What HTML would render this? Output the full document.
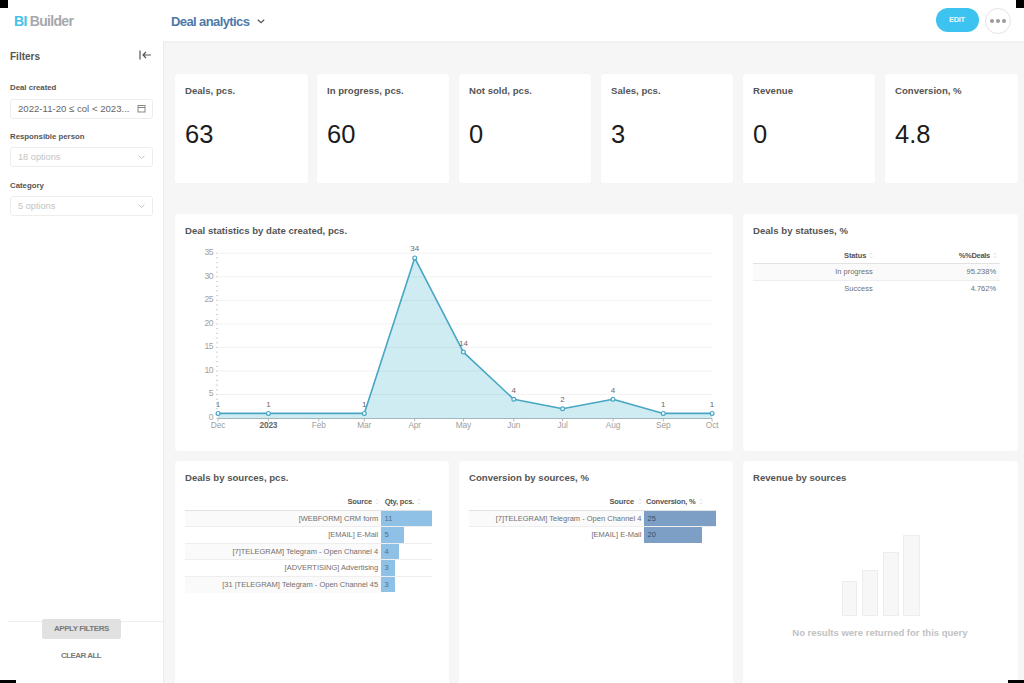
<!DOCTYPE html>
<html><head><meta charset="utf-8">
<style>
*{box-sizing:border-box;margin:0;padding:0}
html,body{width:1024px;height:683px;overflow:hidden;background:#fff;font-family:"Liberation Sans",sans-serif;position:relative}
.abs{position:absolute}
.t{position:absolute;white-space:nowrap;line-height:1}
#main{position:absolute;left:163px;top:41px;width:861px;height:642px;background:#f6f6f6;border-left:1px solid #ececec;box-shadow:inset 0 2px 2px rgba(0,0,0,0.025)}
.card{position:absolute;background:#fff;border-radius:3px;box-shadow:0 0 2px rgba(0,0,0,0.02)}
.kt{position:absolute;left:10px;top:12px;font-size:9.6px;font-weight:700;color:#555;white-space:nowrap;line-height:1}
.kv{position:absolute;left:10px;top:48px;font-size:25.5px;color:#1c1c1c;white-space:nowrap;line-height:1}
.ct{position:absolute;left:10px;top:12px;font-size:9.6px;font-weight:700;color:#555;white-space:nowrap;line-height:1}
.corner{position:absolute;background:#000}
.lbl{font-size:7.8px;font-weight:700;color:#555}
.inp{position:absolute;left:10px;width:143px;height:20px;border:1px solid #ededed;border-radius:3px;background:#fff}
</style></head><body>

<!-- header -->
<div class="t" style="left:14px;top:14px;font-size:14px;font-weight:700;letter-spacing:-0.7px"><span style="color:#45c1ea">BI</span> <span style="color:#a6a8ab">Builder</span></div>
<div class="t" style="left:171px;top:15px;font-size:13px;font-weight:700;color:#4d79aa;letter-spacing:-0.6px">Deal analytics</div>
<svg class="abs" style="left:256px;top:17px" width="10" height="8" viewBox="0 0 10 8"><path d="M1.8 2.8 L5 5.8 L8.2 2.8" fill="none" stroke="#555" stroke-width="1.2"/></svg>
<div class="abs" style="left:936px;top:8px;width:43px;height:24px;border-radius:12px;background:#3cc3f0"></div>
<div class="t" style="left:949px;top:16px;font-size:7.5px;font-weight:700;color:#eaf8fe;letter-spacing:-0.3px">EDIT</div>
<div class="abs" style="left:985px;top:8px;width:26px;height:26px;border-radius:50%;border:1px solid #e4e4e4"></div>
<div class="abs" style="left:990px;top:19px;width:4px;height:4px;border-radius:50%;background:#9a9a9a"></div>
<div class="abs" style="left:996px;top:19px;width:4px;height:4px;border-radius:50%;background:#9a9a9a"></div>
<div class="abs" style="left:1002px;top:19px;width:4px;height:4px;border-radius:50%;background:#9a9a9a"></div>

<!-- sidebar -->
<div class="t" style="left:10px;top:52px;font-size:10px;font-weight:700;color:#555">Filters</div>
<svg class="abs" style="left:138px;top:49px" width="14" height="12" viewBox="0 0 14 12"><path d="M2 1.5 V10.5" stroke="#555" stroke-width="1.2"/><path d="M13 6 H5 M8 3 L5 6 L8 9" fill="none" stroke="#555" stroke-width="1.2"/></svg>

<div class="t lbl" style="left:10px;top:84px">Deal created</div>
<div class="inp" style="top:99px"></div>
<div class="t" style="left:18px;top:104px;font-size:9.6px;color:#666">2022-11-20 ≤ col &lt; 2023...</div>
<svg class="abs" style="left:137px;top:104px" width="9" height="9" viewBox="0 0 9 9"><rect x="1" y="1.5" width="7" height="6.5" fill="none" stroke="#888" stroke-width="1"/><path d="M1 3.5 H8" stroke="#888" stroke-width="1"/></svg>

<div class="t lbl" style="left:10px;top:133px">Responsible person</div>
<div class="inp" style="top:147px"></div>
<div class="t" style="left:18px;top:153px;font-size:9.2px;color:#c4c4c4">18 options</div>
<svg class="abs" style="left:137px;top:153px" width="9" height="8" viewBox="0 0 9 8"><path d="M1.5 2.5 L4.5 5.5 L7.5 2.5" fill="none" stroke="#c8c8c8" stroke-width="1"/></svg>

<div class="t lbl" style="left:10px;top:182px">Category</div>
<div class="inp" style="top:196px"></div>
<div class="t" style="left:18px;top:202px;font-size:9.2px;color:#c4c4c4">5 options</div>
<svg class="abs" style="left:137px;top:202px" width="9" height="8" viewBox="0 0 9 8"><path d="M1.5 2.5 L4.5 5.5 L7.5 2.5" fill="none" stroke="#c8c8c8" stroke-width="1"/></svg>

<div class="abs" style="left:8px;top:621px;width:155px;height:1px;background:#eeeeee"></div>
<div class="abs" style="left:42px;top:619px;width:79px;height:20px;background:#e1e1e1;border-radius:2px"></div>
<div class="t" style="left:54px;top:625px;font-size:8px;font-weight:700;color:#7a7a7a;letter-spacing:-0.45px">APPLY FILTERS</div>
<div class="t" style="left:61px;top:652px;font-size:8px;font-weight:700;color:#7a7a7a;letter-spacing:-0.55px">CLEAR ALL</div>

<!-- main -->
<div id="main"></div>

<!-- KPI cards -->
<div class="card" style="left:175px;top:74px;width:133px;height:109px"><div class="kt">Deals, pcs.</div><div class="kv">63</div></div>
<div class="card" style="left:317px;top:74px;width:132px;height:109px"><div class="kt">In progress, pcs.</div><div class="kv">60</div></div>
<div class="card" style="left:459px;top:74px;width:132px;height:109px"><div class="kt">Not sold, pcs.</div><div class="kv">0</div></div>
<div class="card" style="left:601px;top:74px;width:132px;height:109px"><div class="kt">Sales, pcs.</div><div class="kv">3</div></div>
<div class="card" style="left:743px;top:74px;width:132px;height:109px"><div class="kt">Revenue</div><div class="kv">0</div></div>
<div class="card" style="left:885px;top:74px;width:133px;height:109px"><div class="kt">Conversion, %</div><div class="kv">4.8</div></div>

<!-- row 2 -->
<div class="card" style="left:175px;top:214px;width:558px;height:237px"><div class="ct">Deal statistics by date created, pcs.</div></div>
<div class="card" style="left:743px;top:214px;width:275px;height:237px"><div class="ct">Deals by statuses, %</div></div>

<!--CHART START-->
<svg class="abs" style="left:175px;top:214px" width="558" height="237" viewBox="175 214 558 237" font-family="Liberation Sans">
<line x1="216" y1="418.1" x2="218" y2="418.1" stroke="#c4c4c4" stroke-width="0.8"/>
<line x1="216" y1="413.4" x2="218" y2="413.4" stroke="#c4c4c4" stroke-width="0.8"/>
<line x1="216" y1="408.7" x2="218" y2="408.7" stroke="#c4c4c4" stroke-width="0.8"/>
<line x1="216" y1="404.0" x2="218" y2="404.0" stroke="#c4c4c4" stroke-width="0.8"/>
<line x1="216" y1="399.3" x2="218" y2="399.3" stroke="#c4c4c4" stroke-width="0.8"/>
<line x1="216" y1="394.5" x2="218" y2="394.5" stroke="#c4c4c4" stroke-width="0.8"/>
<line x1="216" y1="389.8" x2="218" y2="389.8" stroke="#c4c4c4" stroke-width="0.8"/>
<line x1="216" y1="385.1" x2="218" y2="385.1" stroke="#c4c4c4" stroke-width="0.8"/>
<line x1="216" y1="380.4" x2="218" y2="380.4" stroke="#c4c4c4" stroke-width="0.8"/>
<line x1="216" y1="375.7" x2="218" y2="375.7" stroke="#c4c4c4" stroke-width="0.8"/>
<line x1="216" y1="371.0" x2="218" y2="371.0" stroke="#c4c4c4" stroke-width="0.8"/>
<line x1="216" y1="366.3" x2="218" y2="366.3" stroke="#c4c4c4" stroke-width="0.8"/>
<line x1="216" y1="361.6" x2="218" y2="361.6" stroke="#c4c4c4" stroke-width="0.8"/>
<line x1="216" y1="356.9" x2="218" y2="356.9" stroke="#c4c4c4" stroke-width="0.8"/>
<line x1="216" y1="352.1" x2="218" y2="352.1" stroke="#c4c4c4" stroke-width="0.8"/>
<line x1="216" y1="347.4" x2="218" y2="347.4" stroke="#c4c4c4" stroke-width="0.8"/>
<line x1="216" y1="342.7" x2="218" y2="342.7" stroke="#c4c4c4" stroke-width="0.8"/>
<line x1="216" y1="338.0" x2="218" y2="338.0" stroke="#c4c4c4" stroke-width="0.8"/>
<line x1="216" y1="333.3" x2="218" y2="333.3" stroke="#c4c4c4" stroke-width="0.8"/>
<line x1="216" y1="328.6" x2="218" y2="328.6" stroke="#c4c4c4" stroke-width="0.8"/>
<line x1="216" y1="323.9" x2="218" y2="323.9" stroke="#c4c4c4" stroke-width="0.8"/>
<line x1="216" y1="319.2" x2="218" y2="319.2" stroke="#c4c4c4" stroke-width="0.8"/>
<line x1="216" y1="314.5" x2="218" y2="314.5" stroke="#c4c4c4" stroke-width="0.8"/>
<line x1="216" y1="309.7" x2="218" y2="309.7" stroke="#c4c4c4" stroke-width="0.8"/>
<line x1="216" y1="305.0" x2="218" y2="305.0" stroke="#c4c4c4" stroke-width="0.8"/>
<line x1="216" y1="300.3" x2="218" y2="300.3" stroke="#c4c4c4" stroke-width="0.8"/>
<line x1="216" y1="295.6" x2="218" y2="295.6" stroke="#c4c4c4" stroke-width="0.8"/>
<line x1="216" y1="290.9" x2="218" y2="290.9" stroke="#c4c4c4" stroke-width="0.8"/>
<line x1="216" y1="286.2" x2="218" y2="286.2" stroke="#c4c4c4" stroke-width="0.8"/>
<line x1="216" y1="281.5" x2="218" y2="281.5" stroke="#c4c4c4" stroke-width="0.8"/>
<line x1="216" y1="276.8" x2="218" y2="276.8" stroke="#c4c4c4" stroke-width="0.8"/>
<line x1="216" y1="272.1" x2="218" y2="272.1" stroke="#c4c4c4" stroke-width="0.8"/>
<line x1="216" y1="267.3" x2="218" y2="267.3" stroke="#c4c4c4" stroke-width="0.8"/>
<line x1="216" y1="262.6" x2="218" y2="262.6" stroke="#c4c4c4" stroke-width="0.8"/>
<line x1="216" y1="257.9" x2="218" y2="257.9" stroke="#c4c4c4" stroke-width="0.8"/>
<line x1="216" y1="253.2" x2="218" y2="253.2" stroke="#c4c4c4" stroke-width="0.8"/>
<text x="213.3" y="420.0" font-size="8.6" letter-spacing="-0.35" fill="#a0a0a0" text-anchor="end">0</text>
<text x="213.3" y="396.4" font-size="8.6" letter-spacing="-0.35" fill="#a0a0a0" text-anchor="end">5</text>
<text x="213.3" y="372.9" font-size="8.6" letter-spacing="-0.35" fill="#a0a0a0" text-anchor="end">10</text>
<text x="213.3" y="349.29999999999995" font-size="8.6" letter-spacing="-0.35" fill="#a0a0a0" text-anchor="end">15</text>
<text x="213.3" y="325.79999999999995" font-size="8.6" letter-spacing="-0.35" fill="#a0a0a0" text-anchor="end">20</text>
<text x="213.3" y="302.2" font-size="8.6" letter-spacing="-0.35" fill="#a0a0a0" text-anchor="end">25</text>
<text x="213.3" y="278.7" font-size="8.6" letter-spacing="-0.35" fill="#a0a0a0" text-anchor="end">30</text>
<text x="213.3" y="255.1" font-size="8.6" letter-spacing="-0.35" fill="#a0a0a0" text-anchor="end">35</text>
<polygon points="218,418.5 218,413.4 268.4,413.4 364.3,413.4 414.7,257.9 463.4,352.1 513.8,399.3 562.6,408.7 613,399.3 663.3,413.4 712.1,413.4 712.1,418.5" fill="#d0ecf3"/>
<line x1="219" y1="394.5" x2="712.5" y2="394.5" stroke="rgba(0,0,0,0.055)" stroke-width="1"/>
<line x1="219" y1="371.0" x2="712.5" y2="371.0" stroke="rgba(0,0,0,0.055)" stroke-width="1"/>
<line x1="219" y1="347.4" x2="712.5" y2="347.4" stroke="rgba(0,0,0,0.055)" stroke-width="1"/>
<line x1="219" y1="323.9" x2="712.5" y2="323.9" stroke="rgba(0,0,0,0.055)" stroke-width="1"/>
<line x1="219" y1="300.3" x2="712.5" y2="300.3" stroke="rgba(0,0,0,0.055)" stroke-width="1"/>
<line x1="219" y1="276.8" x2="712.5" y2="276.8" stroke="rgba(0,0,0,0.055)" stroke-width="1"/>
<line x1="219" y1="253.2" x2="712.5" y2="253.2" stroke="rgba(0,0,0,0.055)" stroke-width="1"/>
<line x1="218" y1="418.5" x2="712.1" y2="418.5" stroke="#a4b6bd" stroke-width="1"/>
<line x1="218" y1="418.5" x2="218" y2="421.5" stroke="#aaa" stroke-width="0.8"/>
<text x="218" y="428.2" font-size="8.3" fill="#a0a0a0" letter-spacing="-0.1" text-anchor="middle">Dec</text>
<line x1="268.4" y1="418.5" x2="268.4" y2="421.5" stroke="#aaa" stroke-width="0.8"/>
<text x="268.4" y="428.2" font-size="8.3" font-weight="700" fill="#666" letter-spacing="-0.2" text-anchor="middle">2023</text>
<line x1="318.8" y1="418.5" x2="318.8" y2="421.5" stroke="#aaa" stroke-width="0.8"/>
<text x="318.8" y="428.2" font-size="8.3" fill="#a0a0a0" letter-spacing="-0.1" text-anchor="middle">Feb</text>
<line x1="364.3" y1="418.5" x2="364.3" y2="421.5" stroke="#aaa" stroke-width="0.8"/>
<text x="364.3" y="428.2" font-size="8.3" fill="#a0a0a0" letter-spacing="-0.1" text-anchor="middle">Mar</text>
<line x1="414.7" y1="418.5" x2="414.7" y2="421.5" stroke="#aaa" stroke-width="0.8"/>
<text x="414.7" y="428.2" font-size="8.3" fill="#a0a0a0" letter-spacing="-0.1" text-anchor="middle">Apr</text>
<line x1="463.4" y1="418.5" x2="463.4" y2="421.5" stroke="#aaa" stroke-width="0.8"/>
<text x="463.4" y="428.2" font-size="8.3" fill="#a0a0a0" letter-spacing="-0.1" text-anchor="middle">May</text>
<line x1="513.8" y1="418.5" x2="513.8" y2="421.5" stroke="#aaa" stroke-width="0.8"/>
<text x="513.8" y="428.2" font-size="8.3" fill="#a0a0a0" letter-spacing="-0.1" text-anchor="middle">Jun</text>
<line x1="562.6" y1="418.5" x2="562.6" y2="421.5" stroke="#aaa" stroke-width="0.8"/>
<text x="562.6" y="428.2" font-size="8.3" fill="#a0a0a0" letter-spacing="-0.1" text-anchor="middle">Jul</text>
<line x1="613" y1="418.5" x2="613" y2="421.5" stroke="#aaa" stroke-width="0.8"/>
<text x="613" y="428.2" font-size="8.3" fill="#a0a0a0" letter-spacing="-0.1" text-anchor="middle">Aug</text>
<line x1="663.3" y1="418.5" x2="663.3" y2="421.5" stroke="#aaa" stroke-width="0.8"/>
<text x="663.3" y="428.2" font-size="8.3" fill="#a0a0a0" letter-spacing="-0.1" text-anchor="middle">Sep</text>
<line x1="712.1" y1="418.5" x2="712.1" y2="421.5" stroke="#aaa" stroke-width="0.8"/>
<text x="712.1" y="428.2" font-size="8.3" fill="#a0a0a0" letter-spacing="-0.1" text-anchor="middle">Oct</text>
<polyline points="218,413.4 268.4,413.4 364.3,413.4 414.7,257.9 463.4,352.1 513.8,399.3 562.6,408.7 613,399.3 663.3,413.4 712.1,413.4" fill="none" stroke="#47a6c4" stroke-width="1.6" stroke-linejoin="round"/>
<circle cx="218" cy="413.4" r="1.9" fill="#fff" stroke="#45a5c3" stroke-width="1.2"/>
<text x="218" y="406.9" font-size="8" fill="#6a6a6a" text-anchor="middle">1</text>
<circle cx="268.4" cy="413.4" r="1.9" fill="#fff" stroke="#45a5c3" stroke-width="1.2"/>
<text x="268.4" y="406.9" font-size="8" fill="#6a6a6a" text-anchor="middle">1</text>
<circle cx="364.3" cy="413.4" r="1.9" fill="#fff" stroke="#45a5c3" stroke-width="1.2"/>
<text x="364.3" y="406.9" font-size="8" fill="#6a6a6a" text-anchor="middle">1</text>
<circle cx="414.7" cy="257.9" r="1.9" fill="#fff" stroke="#45a5c3" stroke-width="1.2"/>
<text x="414.7" y="251.39999999999998" font-size="8" fill="#6a6a6a" text-anchor="middle">34</text>
<circle cx="463.4" cy="352.1" r="1.9" fill="#fff" stroke="#45a5c3" stroke-width="1.2"/>
<text x="463.4" y="345.6" font-size="8" fill="#6a6a6a" text-anchor="middle">14</text>
<circle cx="513.8" cy="399.3" r="1.9" fill="#fff" stroke="#45a5c3" stroke-width="1.2"/>
<text x="513.8" y="392.8" font-size="8" fill="#6a6a6a" text-anchor="middle">4</text>
<circle cx="562.6" cy="408.7" r="1.9" fill="#fff" stroke="#45a5c3" stroke-width="1.2"/>
<text x="562.6" y="402.2" font-size="8" fill="#6a6a6a" text-anchor="middle">2</text>
<circle cx="613" cy="399.3" r="1.9" fill="#fff" stroke="#45a5c3" stroke-width="1.2"/>
<text x="613" y="392.8" font-size="8" fill="#6a6a6a" text-anchor="middle">4</text>
<circle cx="663.3" cy="413.4" r="1.9" fill="#fff" stroke="#45a5c3" stroke-width="1.2"/>
<text x="663.3" y="406.9" font-size="8" fill="#6a6a6a" text-anchor="middle">1</text>
<circle cx="712.1" cy="413.4" r="1.9" fill="#fff" stroke="#45a5c3" stroke-width="1.2"/>
<text x="712.1" y="406.9" font-size="8" fill="#6a6a6a" text-anchor="middle">1</text>
</svg>
<!--CHART END-->
<!-- row 3 -->
<div class="card" style="left:175px;top:461px;width:274px;height:230px"><div class="ct">Deals by sources, pcs.</div></div>
<div class="card" style="left:459px;top:461px;width:274px;height:230px"><div class="ct">Conversion by sources, %</div></div>
<div class="card" style="left:743px;top:461px;width:275px;height:230px"><div class="ct">Revenue by sources</div></div>

<!--TABLES START-->
<div class="abs" style="left:752.5px;top:264px;width:247px;height:16.5px;background:#fafafa;"></div>
<div class="abs" style="left:752.5px;top:263px;width:247px;height:1px;background:#e2e2e2;"></div>
<div class="abs" style="left:752.5px;top:280px;width:247px;height:1px;background:#eeeeee;"></div>
<div class="t" style="right:157.7px;top:251.8px;font-size:7.5px;font-weight:700;color:#555;letter-spacing:-0.1px">Status</div>
<svg class="abs" style="left:868.5px;top:251.9px" width="4" height="7" viewBox="0 0 4 7"><path d="M0.5 2.8 L2 1 L3.5 2.8 M0.5 4.2 L2 6 L3.5 4.2" fill="none" stroke="#e0e0e0" stroke-width="0.8"/></svg>
<div class="t" style="right:34.0px;top:251.8px;font-size:7.5px;font-weight:700;color:#555;letter-spacing:-0.3px">%%Deals</div>
<svg class="abs" style="left:992.5px;top:251.9px" width="4" height="7" viewBox="0 0 4 7"><path d="M0.5 2.8 L2 1 L3.5 2.8 M0.5 4.2 L2 6 L3.5 4.2" fill="none" stroke="#e0e0e0" stroke-width="0.8"/></svg>
<div class="t" style="right:151.3px;top:268.2px;font-size:7.5px;font-weight:400;color:#707070;">In progress</div>
<div class="t" style="right:27.9px;top:268.2px;font-size:7.5px;font-weight:400;color:#707070;">95.238%</div>
<div class="t" style="right:151.3px;top:284.6px;font-size:7.5px;font-weight:400;color:#707070;">Success</div>
<div class="t" style="right:27.9px;top:284.6px;font-size:7.5px;font-weight:400;color:#707070;">4.762%</div>
<div class="abs" style="left:184.6px;top:510.1px;width:197px;height:16.55px;background:#fafafa;"></div>
<div class="abs" style="left:381.2px;top:510.4px;width:50.4px;height:15.8px;background:#8fc0e6;"></div>
<div class="t" style="right:645.8px;top:514.6px;font-size:7.5px;font-weight:400;color:#707070;">[WEBFORM] CRM form</div>
<div class="t" style="left:384.6px;top:514.6px;font-size:7.5px;font-weight:400;color:#4f6f90;">11</div>
<div class="abs" style="left:184.6px;top:526.1px;width:247px;height:1px;background:#eeeeee;"></div>
<div class="abs" style="left:381.2px;top:526.9px;width:22.9px;height:15.8px;background:#8fc0e6;"></div>
<div class="t" style="right:645.8px;top:531.1px;font-size:7.5px;font-weight:400;color:#707070;">[EMAIL] E-Mail</div>
<div class="t" style="left:384.6px;top:531.1px;font-size:7.5px;font-weight:400;color:#4f6f90;">5</div>
<div class="abs" style="left:184.6px;top:543.2px;width:197px;height:16.55px;background:#fafafa;"></div>
<div class="abs" style="left:184.6px;top:542.7px;width:247px;height:1px;background:#eeeeee;"></div>
<div class="abs" style="left:381.2px;top:543.5px;width:18.3px;height:15.8px;background:#8fc0e6;"></div>
<div class="t" style="right:645.8px;top:547.7px;font-size:7.5px;font-weight:400;color:#707070;">[7]TELEGRAM] Telegram - Open Channel 4</div>
<div class="t" style="left:384.6px;top:547.7px;font-size:7.5px;font-weight:400;color:#4f6f90;">4</div>
<div class="abs" style="left:184.6px;top:559.2px;width:247px;height:1px;background:#eeeeee;"></div>
<div class="abs" style="left:381.2px;top:560.0px;width:13.7px;height:15.8px;background:#8fc0e6;"></div>
<div class="t" style="right:645.8px;top:564.2px;font-size:7.5px;font-weight:400;color:#707070;">[ADVERTISING] Advertising</div>
<div class="t" style="left:384.6px;top:564.2px;font-size:7.5px;font-weight:400;color:#4f6f90;">3</div>
<div class="abs" style="left:184.6px;top:576.3px;width:197px;height:16.55px;background:#fafafa;"></div>
<div class="abs" style="left:184.6px;top:575.8px;width:247px;height:1px;background:#eeeeee;"></div>
<div class="abs" style="left:381.2px;top:576.6px;width:13.7px;height:15.8px;background:#8fc0e6;"></div>
<div class="t" style="right:645.8px;top:580.8px;font-size:7.5px;font-weight:400;color:#707070;">[31 |TELEGRAM] Telegram - Open Channel 45</div>
<div class="t" style="left:384.6px;top:580.8px;font-size:7.5px;font-weight:400;color:#4f6f90;">3</div>
<div class="abs" style="left:184.6px;top:509.6px;width:247px;height:1px;background:#e2e2e2;"></div>
<div class="t" style="right:652.0px;top:498.3px;font-size:7.5px;font-weight:700;color:#555;letter-spacing:-0.15px">Source</div>
<svg class="abs" style="left:374.5px;top:498.0px" width="4" height="7" viewBox="0 0 4 7"><path d="M0.5 2.8 L2 1 L3.5 2.8 M0.5 4.2 L2 6 L3.5 4.2" fill="none" stroke="#e0e0e0" stroke-width="0.8"/></svg>
<div class="t" style="right:610.0px;top:498.3px;font-size:7.5px;font-weight:700;color:#555;letter-spacing:-0.2px">Qty, pcs.</div>
<svg class="abs" style="left:417px;top:498.0px" width="4" height="7" viewBox="0 0 4 7"><path d="M0.5 2.8 L2 1 L3.5 2.8 M0.5 4.2 L2 6 L3.5 4.2" fill="none" stroke="#e0e0e0" stroke-width="0.8"/></svg>
<div class="abs" style="left:469.2px;top:510.1px;width:175px;height:16.55px;background:#fafafa;"></div>
<div class="abs" style="left:644.2px;top:510.4px;width:71.7px;height:15.8px;background:#7d9fc6;"></div>
<div class="t" style="right:382.6px;top:514.6px;font-size:7.5px;font-weight:400;color:#707070;">[7]TELEGRAM] Telegram - Open Channel 4</div>
<div class="t" style="left:647.5px;top:514.6px;font-size:7.5px;font-weight:400;color:#34506e;">25</div>
<div class="abs" style="left:469.2px;top:526.1px;width:246.5px;height:1px;background:#eeeeee;"></div>
<div class="abs" style="left:644.2px;top:526.9px;width:57.4px;height:15.8px;background:#7d9fc6;"></div>
<div class="t" style="right:382.6px;top:531.1px;font-size:7.5px;font-weight:400;color:#707070;">[EMAIL] E-Mail</div>
<div class="t" style="left:647.5px;top:531.1px;font-size:7.5px;font-weight:400;color:#34506e;">20</div>
<div class="abs" style="left:469.2px;top:509.6px;width:246.5px;height:1px;background:#e2e2e2;"></div>
<div class="t" style="right:390.0px;top:498.4px;font-size:7.5px;font-weight:700;color:#555;letter-spacing:-0.15px">Source</div>
<svg class="abs" style="left:637.5px;top:498.3px" width="4" height="7" viewBox="0 0 4 7"><path d="M0.5 2.8 L2 1 L3.5 2.8 M0.5 4.2 L2 6 L3.5 4.2" fill="none" stroke="#e0e0e0" stroke-width="0.8"/></svg>
<div class="t" style="right:328.5px;top:498.4px;font-size:7.5px;font-weight:700;color:#555;letter-spacing:-0.2px">Conversion, %</div>
<svg class="abs" style="left:699px;top:498.3px" width="4" height="7" viewBox="0 0 4 7"><path d="M0.5 2.8 L2 1 L3.5 2.8 M0.5 4.2 L2 6 L3.5 4.2" fill="none" stroke="#e0e0e0" stroke-width="0.8"/></svg>
<div class="abs" style="left:842.1px;top:581.1px;width:15.4px;height:34.9px;background:#f7f7f7;border:1px solid #ededed"></div>
<div class="abs" style="left:862px;top:569.6px;width:15.8px;height:46.4px;background:#f7f7f7;border:1px solid #ededed"></div>
<div class="abs" style="left:882.5px;top:552.2px;width:16.0px;height:63.8px;background:#f7f7f7;border:1px solid #ededed"></div>
<div class="abs" style="left:903px;top:535px;width:16.5px;height:81px;background:#f7f7f7;border:1px solid #ededed"></div>
<div class="t" style="left:792.3px;top:628.0px;font-size:9.5px;font-weight:700;color:#c2c2c2;letter-spacing:0px">No results were returned for this query</div>
<!--TABLES END-->
<!-- corners -->
<div class="corner" style="left:0;top:0;width:8px;height:8px"></div>
<div class="corner" style="left:1016px;top:0;width:8px;height:8px"></div>
<div class="corner" style="left:0;top:680px;width:16px;height:3px"></div>
<div class="corner" style="left:1008px;top:680px;width:16px;height:3px"></div>
</body></html>
